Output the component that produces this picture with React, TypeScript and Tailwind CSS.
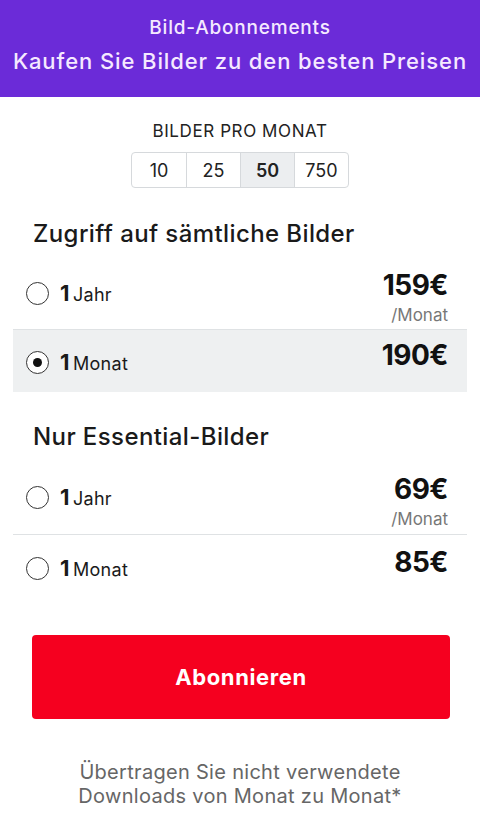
import React from 'react';

const font = { fontFamily: 'Inter, "Noto Sans", sans-serif' };

function Radio({ checked }: { checked?: boolean }) {
  return (
    <span className="w-[23px] h-[23px] rounded-full border-[1.5px] border-[#333] bg-white flex items-center justify-center shrink-0">
      {checked && <span className="w-[9px] h-[9px] rounded-full bg-[#111]" />}
    </span>
  );
}

interface PlanRowProps {
  term: string;
  price: string;
  perMonth?: boolean;
  checked?: boolean;
  height: string;
  priceTop: string;
  radioTop: string;
  className?: string;
}

function PlanRow({ term, price, perMonth, checked, height, priceTop, radioTop, className }: PlanRowProps) {
  return (
    <div className={`flex justify-between pl-[13px] pr-[19px] ${height} ${className ?? ''}`}>
      <div className={`flex items-center gap-[11px] ${radioTop} h-[23px]`}>
        <Radio checked={checked} />
        <span className="flex items-baseline text-[#1a1a1a]">
          <span className="text-[22px] font-bold tracking-tight mr-[4px]">1</span>
          <span className="text-[18px] tracking-[0.3px]">{term}</span>
        </span>
      </div>
      <div className={`flex flex-col items-end ${priceTop}`}>
        <span className="text-[28px] leading-[30px] font-bold tracking-[-0.5px] text-[#111]">{price}</span>
        {perMonth && <span className="text-[17px] leading-[20px] mt-[5px] text-[#777]">/Monat</span>}
      </div>
    </div>
  );
}

export default function App() {
  return (
    <div className="w-[480px] min-h-[840px] bg-white" style={font}>
      <div className="h-[97px] bg-[#6b2bd8] flex flex-col items-center pt-[16px] text-[#f5e9ff]">
        <div className="text-[19px] leading-[24px] font-medium tracking-[0.8px]">Bild-Abonnements</div>
        <div className="text-[22px] leading-[26px] font-medium mt-[8px] tracking-[0.9px]">Kaufen Sie Bilder zu den besten Preisen</div>
      </div>

      <div className="flex flex-col items-center pt-[23px]">
        <div className="text-[17px] leading-[22px] text-[#222] tracking-[0.6px]">BILDER PRO MONAT</div>
        <div className="mt-[10px] flex h-[36px] border border-[#d6d9dc] rounded-[4px] overflow-hidden text-[18px] text-[#222]">
          <div className="w-[54px] flex items-center justify-center">10</div>
          <div className="w-[54px] flex items-center justify-center border-l border-[#d6d9dc]">25</div>
          <div className="w-[54px] flex items-center justify-center border-l border-[#d6d9dc] bg-[#eceef0] font-semibold">50</div>
          <div className="w-[54px] flex items-center justify-center border-l border-[#d6d9dc]">750</div>
        </div>
      </div>

      <h2 className="mt-[31px] px-[33px] text-[24px] leading-[30px] font-medium text-[#1a1a1a] tracking-[0.4px]">Zugriff auf sämtliche Bilder</h2>

      <div className="mx-[13px] mt-[12px]">
        <PlanRow term="Jahr" price="159€" perMonth height="h-[68px]" priceTop="pt-[9px]" radioTop="mt-[21px]" />
        <PlanRow term="Monat" price="190€" checked height="h-[63px]" priceTop="pt-[10px]" radioTop="mt-[21px]" className="bg-[#eef0f1] border-t border-[#dfe2e4]" />
      </div>

      <h2 className="mt-[30px] px-[33px] text-[24px] leading-[30px] font-medium text-[#1a1a1a] tracking-[0.4px]">Nur Essential-Bilder</h2>

      <div className="mx-[13px] mt-[13px]">
        <PlanRow term="Jahr" price="69€" perMonth height="h-[69px]" priceTop="pt-[9px]" radioTop="mt-[21px]" />
        <PlanRow term="Monat" price="85€" height="h-[65px]" priceTop="pt-[12px]" radioTop="mt-[22px]" className="border-t border-[#dfe2e4]" />
      </div>

      <div className="px-[32px] mt-[36px]">
        <button className="w-[418px] h-[84px] rounded-[4px] bg-[#f5001f] text-white text-[22px] font-bold tracking-[0.6px] flex items-center justify-center">
          Abonnieren
        </button>
      </div>

      <p className="mt-[41px] text-center text-[20px] leading-[24px] text-[#666] tracking-[0.3px]">
        Übertragen Sie nicht verwendete
        <br />
        Downloads von Monat zu Monat*
      </p>
    </div>
  );
}
